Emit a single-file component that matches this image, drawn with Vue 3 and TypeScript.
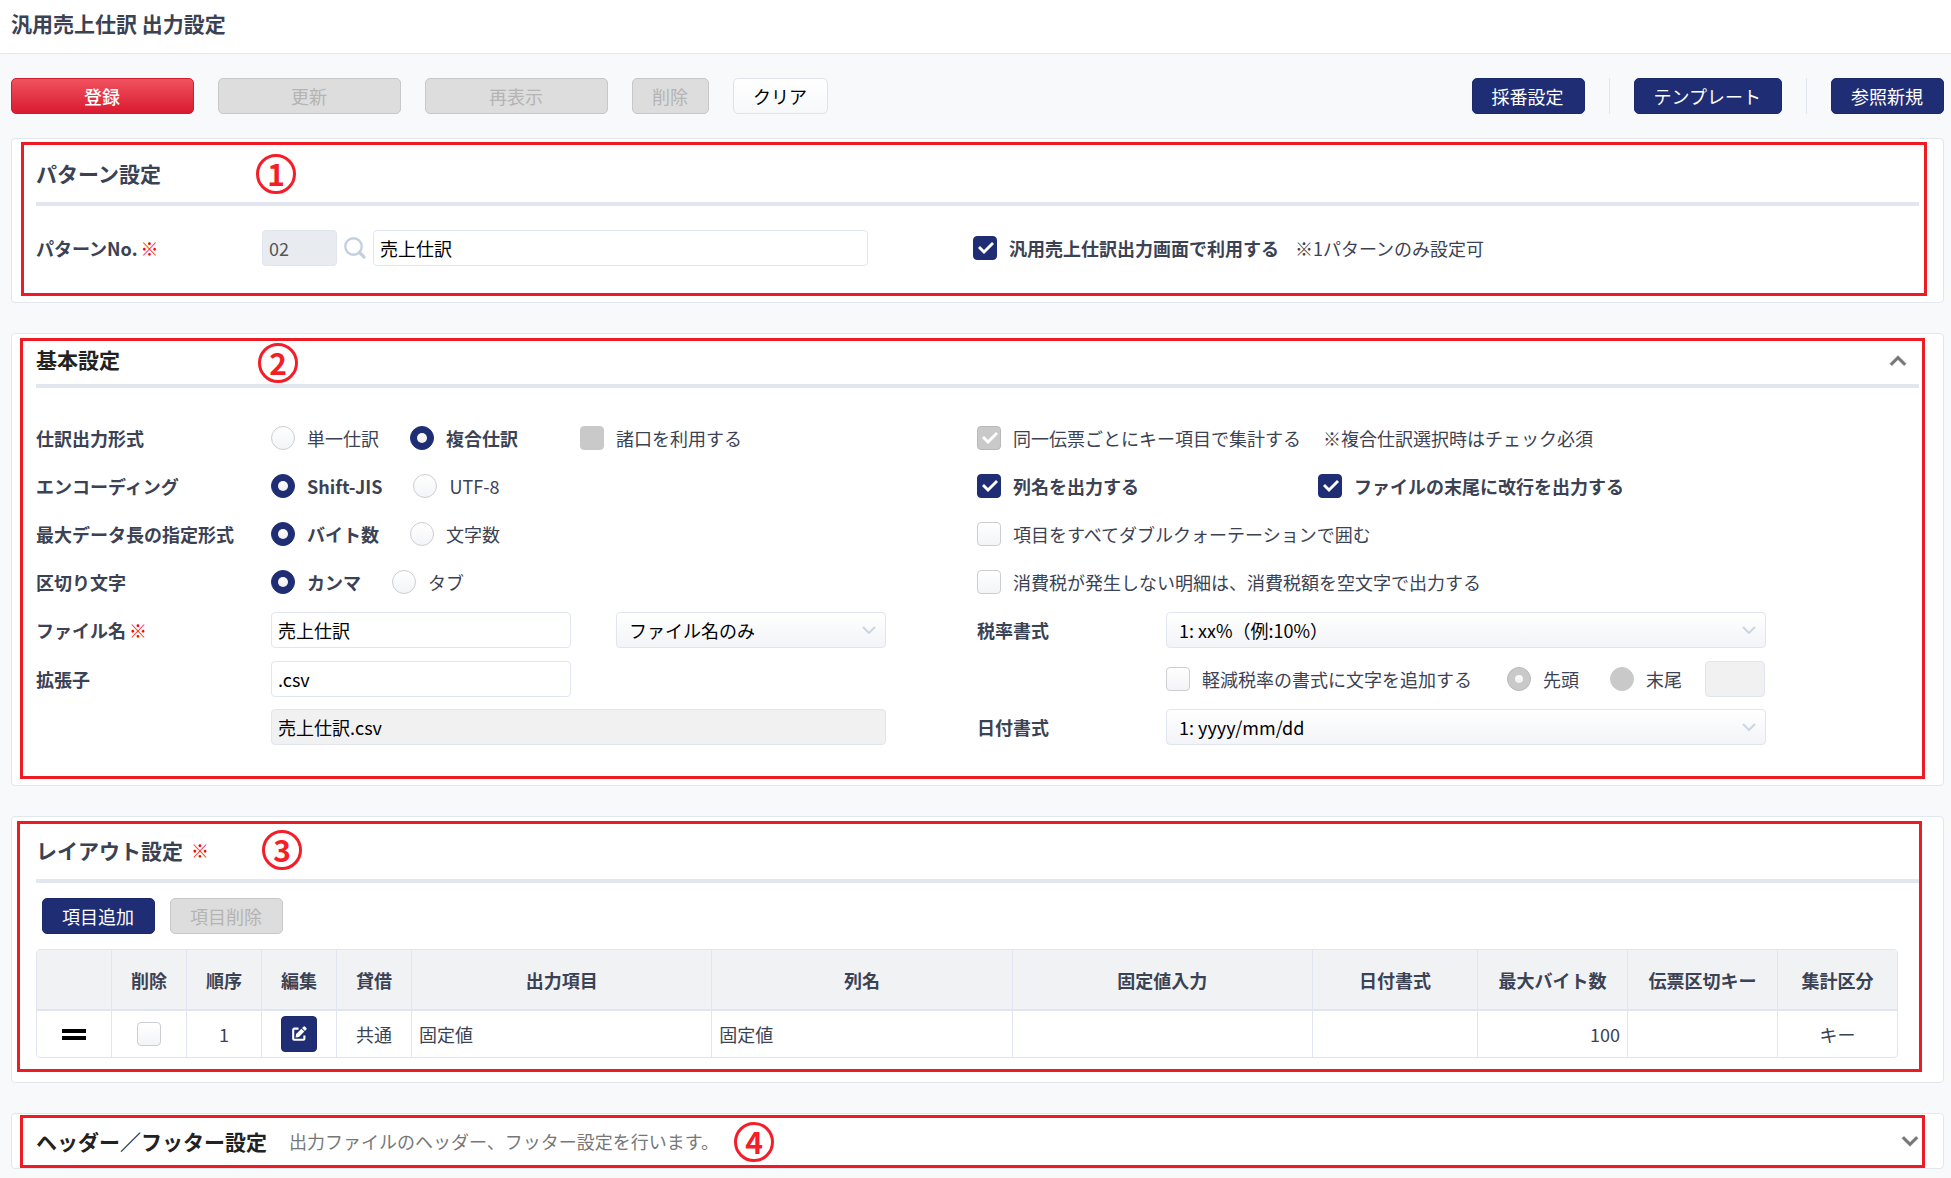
<script setup lang="ts">
import { ref } from 'vue'

interface Choice {
  value: string
  label: string
}

interface RadioRow {
  name: string
  label: string
  choices: Choice[]
}

interface Column {
  key: string
  label: string
  width?: number
}

interface LayoutItem {
  order: number
  side: string
  item: string
  column: string
  fixed: string
  dateFormat: string
  maxBytes: number
  slipKey: string
  summary: string
}

const patternNo = ref('02')
const patternName = ref('売上仕訳')
const useInOutput = ref(true)

const radioRows: RadioRow[] = [
  { name: 'journal', label: '仕訳出力形式', choices: [{ value: 'single', label: '単一仕訳' }, { value: 'compound', label: '複合仕訳' }] },
  { name: 'encoding', label: 'エンコーディング', choices: [{ value: 'sjis', label: 'Shift-JIS' }, { value: 'utf8', label: 'UTF-8' }] },
  { name: 'length', label: '最大データ長の指定形式', choices: [{ value: 'bytes', label: 'バイト数' }, { value: 'chars', label: '文字数' }] },
  { name: 'delimiter', label: '区切り文字', choices: [{ value: 'comma', label: 'カンマ' }, { value: 'tab', label: 'タブ' }] },
]
const selected = ref<Record<string, string>>({
  journal: 'compound',
  encoding: 'sjis',
  length: 'bytes',
  delimiter: 'comma',
})

const sundry = ref(false)
const aggregate = ref(true)
const outputNames = ref(true)
const trailingBreak = ref(true)
const quoteAll = ref(false)
const blankTax = ref(false)
const reducedMark = ref(false)
const markPosition = ref('head')
const fileName = ref('売上仕訳')
const extension = ref('.csv')

const columns: Column[] = [
  { key: 'handle', label: '', width: 74 },
  { key: 'remove', label: '削除', width: 75 },
  { key: 'order', label: '順序', width: 75 },
  { key: 'edit', label: '編集', width: 75 },
  { key: 'side', label: '貸借', width: 75 },
  { key: 'item', label: '出力項目' },
  { key: 'column', label: '列名' },
  { key: 'fixed', label: '固定値入力' },
  { key: 'date', label: '日付書式', width: 165 },
  { key: 'bytes', label: '最大バイト数', width: 150 },
  { key: 'slip', label: '伝票区切キー', width: 150 },
  { key: 'summary', label: '集計区分', width: 120 },
]
const items: LayoutItem[] = [
  { order: 1, side: '共通', item: '固定値', column: '固定値', fixed: '', dateFormat: '', maxBytes: 100, slipKey: '', summary: 'キー' },
]
</script>

<template>
  <div class="page">
    <header class="page-header">
      <h1>汎用売上仕訳 出力設定</h1>
    </header>

    <div class="toolbar">
      <button type="button" class="btn danger wide">登録</button>
      <button type="button" class="btn wide" disabled>更新</button>
      <button type="button" class="btn wide" disabled>再表示</button>
      <button type="button" class="btn" disabled>削除</button>
      <button type="button" class="btn plain">クリア</button>
      <div class="toolbar-end">
        <button type="button" class="btn primary">採番設定</button>
        <span class="divider"></span>
        <button type="button" class="btn primary">テンプレート</button>
        <span class="divider"></span>
        <button type="button" class="btn primary">参照新規</button>
      </div>
    </div>

    <main>
      <section class="card pattern">
        <div class="heading"><h2>パターン設定</h2></div>
        <div class="pattern-row">
          <label class="field-label" for="pattern-no">パターンNo.<span class="required">※</span></label>
          <input id="pattern-no" v-model="patternNo" class="text-box code" type="text" disabled />
          <button type="button" class="search" aria-label="検索">
            <svg viewBox="0 0 22 22" width="22" height="22" fill="none" stroke="#c5d0df">
              <circle cx="9.5" cy="9.5" r="8.2" stroke-width="2.4" />
              <path d="M15.5 15.5L20 20" stroke-width="3.2" stroke-linecap="round" />
            </svg>
          </button>
          <input v-model="patternName" class="text-box name" type="text" aria-label="パターン名" />
          <label class="choice"><input v-model="useInOutput" type="checkbox" /><span>汎用売上仕訳出力画面で利用する</span></label>
          <span class="note">※1パターンのみ設定可</span>
        </div>
        <div class="frame"></div>
        <span class="marker">1</span>
      </section>

      <section class="card basic">
        <div class="heading">
          <h2>基本設定</h2>
          <button type="button" class="toggle" aria-label="閉じる">
            <svg viewBox="0 0 24 24" width="32" height="32" fill="#757575" stroke="#757575" stroke-width=".5"><path d="M12 8l-6 6 1.41 1.41L12 10.83l4.59 4.58L18 14z" /></svg>
          </button>
        </div>
        <div class="basic-body">
          <div class="half">
            <div v-for="row in radioRows" :key="row.name" class="row" role="radiogroup" :aria-label="row.label">
              <span class="field-label">{{ row.label }}</span>
              <label v-for="choice in row.choices" :key="choice.value" class="choice">
                <input v-model="selected[row.name]" type="radio" :name="row.name" :value="choice.value" /><span>{{ choice.label }}</span>
              </label>
              <label v-if="row.name === 'journal'" class="choice sundry"><input v-model="sundry" type="checkbox" disabled /><span>諸口を利用する</span></label>
            </div>
            <div class="row file">
              <label class="field-label" for="file-name">ファイル名<span class="required">※</span></label>
              <input id="file-name" v-model="fileName" class="text-box medium" type="text" />
              <span class="select name-type">
                <select aria-label="ファイル名の形式"><option>ファイル名のみ</option></select>
                <svg viewBox="0 0 14 8" width="14" height="8"><path d="M1 1l6 6 6-6" /></svg>
              </span>
            </div>
            <div class="row">
              <label class="field-label" for="extension">拡張子</label>
              <input id="extension" v-model="extension" class="text-box medium" type="text" />
            </div>
            <div class="row">
              <span class="field-label"></span>
              <input class="text-box preview" type="text" :value="fileName + extension" aria-label="出力ファイル名" readonly />
            </div>
          </div>

          <div class="half">
            <div class="row">
              <label class="choice"><input v-model="aggregate" type="checkbox" disabled /><span>同一伝票ごとにキー項目で集計する</span></label>
              <span class="note">※複合仕訳選択時はチェック必須</span>
            </div>
            <div class="row">
              <label class="choice spread"><input v-model="outputNames" type="checkbox" /><span>列名を出力する</span></label>
              <label class="choice"><input v-model="trailingBreak" type="checkbox" /><span>ファイルの末尾に改行を出力する</span></label>
            </div>
            <div class="row">
              <label class="choice"><input v-model="quoteAll" type="checkbox" /><span>項目をすべてダブルクォーテーションで囲む</span></label>
            </div>
            <div class="row">
              <label class="choice"><input v-model="blankTax" type="checkbox" /><span>消費税が発生しない明細は、消費税額を空文字で出力する</span></label>
            </div>
            <div class="row file">
              <label class="field-label" for="tax-format">税率書式</label>
              <span class="select">
                <select id="tax-format"><option>1: xx%（例:10%）</option></select>
                <svg viewBox="0 0 14 8" width="14" height="8"><path d="M1 1l6 6 6-6" /></svg>
              </span>
            </div>
            <div class="row">
              <span class="field-label"></span>
              <label class="choice spread"><input v-model="reducedMark" type="checkbox" /><span>軽減税率の書式に文字を追加する</span></label>
              <label class="choice"><input v-model="markPosition" type="radio" name="mark" value="head" disabled /><span>先頭</span></label>
              <label class="choice last"><input v-model="markPosition" type="radio" name="mark" value="tail" disabled /><span>末尾</span></label>
              <input class="text-box mark" type="text" aria-label="追加文字" disabled />
            </div>
            <div class="row">
              <label class="field-label" for="date-format">日付書式</label>
              <span class="select">
                <select id="date-format"><option>1: yyyy/mm/dd</option></select>
                <svg viewBox="0 0 14 8" width="14" height="8"><path d="M1 1l6 6 6-6" /></svg>
              </span>
            </div>
          </div>
        </div>
        <div class="frame"></div>
        <span class="marker">2</span>
      </section>

      <section class="card layout">
        <div class="heading"><h2>レイアウト設定</h2><span class="required">※</span></div>
        <div class="layout-actions">
          <button type="button" class="btn primary">項目追加</button>
          <button type="button" class="btn" disabled>項目削除</button>
        </div>
        <table>
          <colgroup>
            <col v-for="c in columns" :key="c.key" :style="c.width ? { width: c.width + 'px' } : undefined" />
          </colgroup>
          <thead>
            <tr>
              <th v-for="c in columns" :key="c.key" scope="col">{{ c.label }}</th>
            </tr>
          </thead>
          <tbody>
            <tr v-for="item in items" :key="item.order">
              <td><span class="handle"></span></td>
              <td><input type="checkbox" aria-label="削除" /></td>
              <td>{{ item.order }}</td>
              <td>
                <button type="button" class="edit" aria-label="編集">
                  <svg viewBox="0 0 16 16" width="16" height="16">
                    <path d="M7.5 2.6H3.2a1 1 0 0 0-1 1v9.2a1 1 0 0 0 1 1h9.2a1 1 0 0 0 1-1V9.5" fill="none" stroke="#fff" stroke-width="2.1" />
                    <path d="M4.6 11.4l.5-3.4 5.3-5.3 2.9 2.9L8 10.9z" fill="#fff" />
                    <path d="M11.1 2l1.3-1.3a1.2 1.2 0 0 1 1.7 0l1.2 1.2a1.2 1.2 0 0 1 0 1.7L14 4.9z" fill="#fff" />
                  </svg>
                </button>
              </td>
              <td>{{ item.side }}</td>
              <td class="start">{{ item.item }}</td>
              <td class="start">{{ item.column }}</td>
              <td class="start">{{ item.fixed }}</td>
              <td>{{ item.dateFormat }}</td>
              <td class="end">{{ item.maxBytes }}</td>
              <td>{{ item.slipKey }}</td>
              <td>{{ item.summary }}</td>
            </tr>
          </tbody>
        </table>
        <div class="frame"></div>
        <span class="marker">3</span>
      </section>

      <section class="card footer">
        <h2>ヘッダー／フッター設定</h2>
        <p>出力ファイルのヘッダー、フッター設定を行います。</p>
        <button type="button" class="toggle" aria-label="開く">
          <svg viewBox="0 0 24 24" width="32" height="32" fill="#757575" stroke="#757575" stroke-width=".5"><path d="M16.59 8.59L12 13.17 7.41 8.59 6 10l6 6 6-6z" /></svg>
        </button>
        <div class="frame"></div>
        <span class="marker">4</span>
      </section>
    </main>
  </div>
</template>

<style>
body {
  margin: 0;
  background: #f8f9fb;
}
</style>

<style scoped>
.page,
.page button,
.page input,
.page select {
  box-sizing: border-box;
  font-family: "Noto Sans CJK JP", sans-serif;
  font-size: 18px;
}

.page {
  color: #3b4254;
  line-height: 26px;
}

.page-header {
  padding: 8px 11px 15px;
  background: #fff;
  border-bottom: 1px solid #e2e6ee;
}

h1,
h2 {
  margin: 0;
  font-size: 21px;
  font-weight: 700;
  line-height: 30px;
}

.toolbar {
  display: flex;
  gap: 24px;
  padding: 24px 7px 24px 11px;
}

.toolbar-end {
  display: flex;
  gap: 24px;
  margin-left: auto;
}

.divider {
  width: 1px;
  background: #e2e6ee;
}

.btn {
  height: 36px;
  padding: 0 20px 0 19px;
  border: 1px solid #c8c8c8;
  border-radius: 5px;
  background: #ddd;
  color: #b4b4b4;
  line-height: 34px;
}

.btn.wide {
  width: 183px;
}

.btn.danger {
  border-color: #cc1c30;
  background: linear-gradient(#f0525f, #da1a31);
  color: #fff;
  font-weight: 500;
}

.btn.plain {
  border-color: #dfe2e8;
  background: linear-gradient(#fff, #f7f8fa);
  color: #000;
}

.btn.primary {
  border-color: #1b2a6b;
  background: #1f2e74;
  color: #fff;
}

main {
  display: flex;
  flex-direction: column;
  gap: 30px;
  padding: 0 7px 9px 11px;
}

.card {
  position: relative;
  padding: 0 24px;
  border: 1px solid #e2e6ee;
  border-radius: 4px;
  background: #fff;
}

.heading {
  display: flex;
  align-items: center;
  padding: 19px 0 14px;
  border-bottom: 4px solid #e1e6ef;
}

.required {
  margin-left: 3px;
  color: #f00;
  font-weight: 500;
}

.heading .required {
  margin-left: 8px;
}

.toggle {
  display: flex;
  margin: 0 5px 0 auto;
  padding: 0;
  border: 0;
  background: none;
}

.field-label {
  flex: none;
  font-weight: 700;
}

.field-label .required {
  font-weight: 500;
}

.text-box {
  height: 36px;
  padding: 0 6px;
  border: 1px solid #e1e5ef;
  border-radius: 4px;
  background: #fff;
  color: #000;
}

.text-box.medium {
  width: 300px;
}

.pattern-row {
  display: flex;
  align-items: center;
  padding: 24px 0 36px;
}

.pattern .field-label {
  width: 226px;
}

.text-box.code {
  width: 75px;
  background: #e8ebf0;
  color: #555;
}

.search {
  display: flex;
  margin: 0 7px;
  padding: 0;
  border: 0;
  background: none;
}

.text-box.name {
  width: 495px;
  margin-right: 105px;
}

.note {
  margin-left: 16px;
}

.choice {
  display: flex;
  align-items: center;
  gap: 12px;
  white-space: nowrap;
}

.choice:has(input:checked:not(:disabled)) {
  font-weight: 700;
}

input[type='checkbox'],
input[type='radio'] {
  position: relative;
  flex: none;
  width: 24px;
  height: 24px;
  margin: 0;
  border: 1px solid #cdced1;
  border-radius: 4px;
  background: linear-gradient(#fff, #f3f4f6);
  appearance: none;
}

input[type='radio'] {
  border-radius: 50%;
}

input[type='checkbox']:checked,
input[type='radio']:checked {
  border-color: #1f2e74;
  background: #1f2e74;
}

input[type='checkbox']:disabled,
input[type='radio']:disabled {
  border-color: #c9c9c9;
  background: #c9c9c9;
}

input[type='checkbox']:checked:disabled,
input[type='radio']:checked:disabled {
  border-color: #b9b9b9;
}

input[type='checkbox']:checked::after {
  position: absolute;
  inset: -1px;
  background: #fff;
  clip-path: polygon(5px 12px, 7px 10px, 11px 14px, 19px 6px, 21px 8px, 11px 18px);
  content: '';
}

input[type='radio']:checked::after {
  position: absolute;
  inset: 6px;
  border-radius: 50%;
  background: linear-gradient(#fff, #eceef1);
  content: '';
}

input[type='radio']:checked:disabled::after {
  inset: 7px;
}

.basic .heading {
  padding: 10px 0;
}

.basic .heading h2,
.footer h2 {
  color: #222;
}

.basic .heading .toggle {
  margin-top: 1px;
  margin-bottom: -3px;
}

.basic-body {
  display: flex;
  padding: 26px 0 34px;
}

.half {
  flex: 1;
}

.half + .half {
  margin-left: -1px;
}

.row {
  display: flex;
  align-items: center;
  height: 48px;
}

.row.file {
  margin-bottom: 1px;
}

.row .choice {
  margin-right: 31px;
}

.row .note {
  margin-left: -9px;
}

.row .sundry {
  margin-left: 31px;
}

.row .spread {
  width: 310px;
}

.row .last {
  margin-right: 23px;
}

.half .field-label {
  width: 235px;
}

.half + .half .field-label {
  width: 189px;
}

.select {
  position: relative;
  width: 600px;
}

.select.name-type {
  width: 270px;
  margin-left: 45px;
}

.select select {
  display: block;
  width: 100%;
  height: 36px;
  padding: 0 36px 0 12px;
  border: 1px solid #e1e5ef;
  border-radius: 4px;
  background: linear-gradient(#fff, #f3f4f7);
  color: #000;
  appearance: none;
}

.select svg {
  position: absolute;
  top: 14px;
  right: 10px;
  fill: none;
  stroke: #cdd5e2;
  stroke-width: 2;
  pointer-events: none;
}

.text-box.preview {
  width: 615px;
  background: #f1f1f1;
}

.text-box.mark {
  width: 60px;
  background: #f1f1f1;
}

.layout {
  padding-bottom: 24px;
}

.layout .heading {
  padding-top: 18px;
}

.layout-actions {
  display: flex;
  gap: 15px;
  padding: 15px 6px;
}

table {
  width: calc(100% - 21px);
  border: 1px solid #e1e5ef;
  border-radius: 4px;
  border-spacing: 0;
  table-layout: fixed;
}

th,
td {
  box-sizing: border-box;
  padding: 0;
  border-left: 1px solid #e1e5ef;
  text-align: center;
}

th:first-child,
td:first-child {
  border-left: 0;
}

th {
  height: 61px;
  border-bottom: 2px solid #e1e5ef;
  background: #f1f2f4;
  font-weight: 700;
}

td {
  height: 46px;
}

td input,
td .edit,
td .handle {
  display: block;
  margin: 0 auto !important;
}

.start {
  padding-left: 7px;
  text-align: left;
}

.end {
  padding-right: 7px;
  text-align: right;
}

.handle {
  width: 24px;
  height: 3px;
  border-top: 4px solid #000;
  border-bottom: 4px solid #000;
}

.edit {
  width: 36px;
  height: 36px;
  padding: 9px;
  border: 1px solid #1b2a6b;
  border-radius: 4px;
  background: #1f2e74;
}

.edit svg {
  display: block;
}

.footer {
  display: flex;
  align-items: center;
  padding: 11px 17px 11px 24px;
}

.footer p {
  margin: 0 0 0 22px;
  color: #777;
}

.footer .toggle {
  margin-right: 0;
}

/* Numbered callouts laid over the cards */
.frame {
  position: absolute;
  inset: 3px 16px 6px 9px;
  border: 3px solid #ed1c24;
  pointer-events: none;
}

.basic .frame {
  inset: 4px 18px 6px 8px;
}

.layout .frame {
  inset: 4px 21px 10px 5px;
}

.footer .frame {
  inset: 1px 18px 0 8px;
}

.marker {
  position: absolute;
  top: 15px;
  left: 244px;
  box-sizing: border-box;
  width: 40px;
  height: 40px;
  border: 3px solid #f51d27;
  border-radius: 50%;
  color: #f51d27;
  font-size: 30px;
  font-weight: 700;
  line-height: 32px;
  text-align: center;
}

.basic .marker {
  top: 9px;
  left: 246px;
}

.layout .marker {
  top: 13px;
  left: 250px;
}

.footer .marker {
  top: 8px;
  left: 722px;
}
</style>
